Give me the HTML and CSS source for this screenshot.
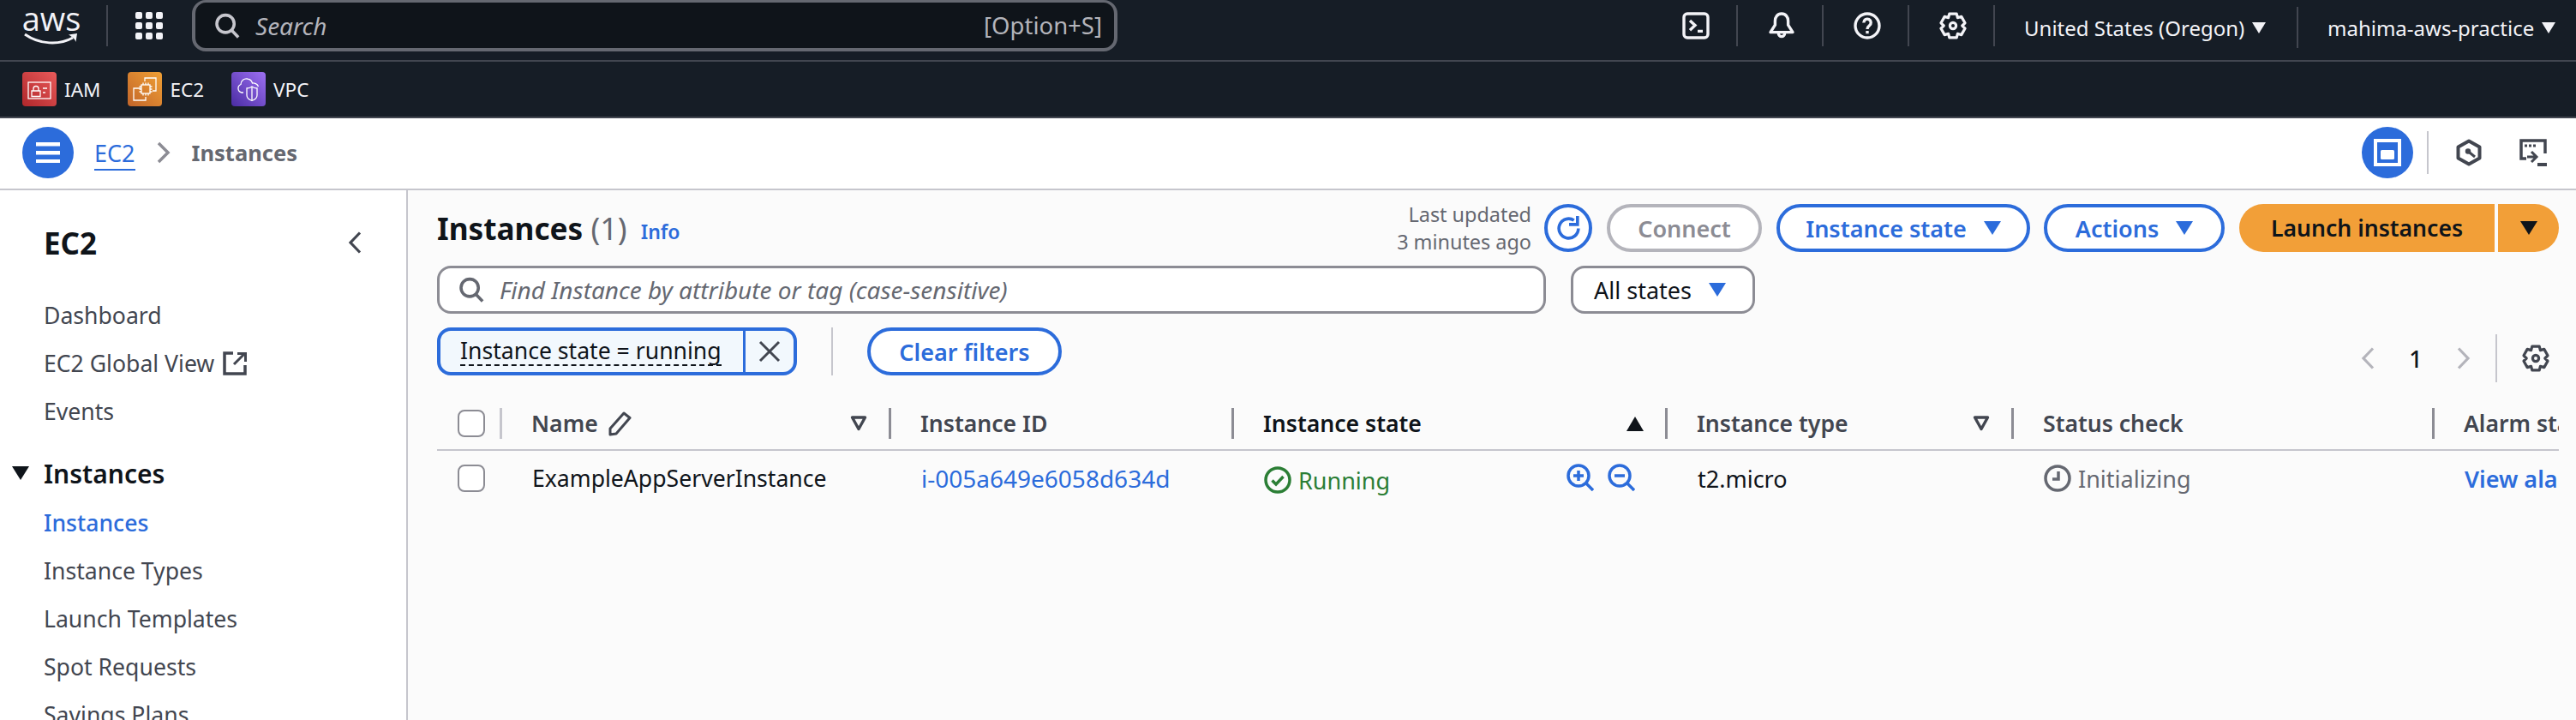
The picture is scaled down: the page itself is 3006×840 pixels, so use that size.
FILE: index.html
```html
<!DOCTYPE html>
<html lang="en">
<head>
    <meta charset="UTF-8">
    <title>Instances | EC2</title>
    <link rel="stylesheet" href="styles.css">
</head>
<body>
    <svg class="sprites" width="0" height="0">
        <symbol id="gear" viewBox="0 0 16 16">
            <path d="M5.900 1.100h4.200l.6 2.200 2.200-.6 2.100 3.700L13.400 8l1.600 1.600-2.100 3.700-2.200-.6-.6 2.200H5.900l-.6-2.200-2.200.6L1 9.600 2.600 8 1 6.400l2.100-3.700 2.200.6z" fill="none" stroke="currentColor" stroke-width="1.600" stroke-linejoin="round"/>
            <circle cx="8" cy="8" r="1.800" fill="none" stroke="currentColor" stroke-width="1.600"/>
        </symbol>
        <symbol id="search" viewBox="0 0 16 16">
            <circle cx="7" cy="6.800" r="5.400" fill="none" stroke="currentColor" stroke-width="1.900"/>
            <path d="M10.800 10.800l4.200 4.400" fill="none" stroke="currentColor" stroke-width="1.900"/>
        </symbol>
        <symbol id="sort-open" viewBox="0 0 20 18">
            <path d="M2.500 2h15L10 15.500z" fill="none" stroke="#424650" stroke-width="3.400" stroke-linejoin="round"/>
        </symbol>
    </svg>

    <header class="top-bar">
        <div class="aws-logo">
            <span class="aws-word">aws</span>
            <svg class="aws-smile" viewBox="0 0 64 14">
                <path d="M1 2c17 12 40 13 56 4" fill="none" stroke="currentColor" stroke-width="3"/>
                <path d="M52 2.500l10-1.500-1.500 10c-1-3-2.500-5-8.500-8.500z" fill="currentColor"/>
            </svg>
        </div>
        <span class="top-divider tall"></span>
        <svg class="grid-icon" viewBox="0 0 32 32">
            <rect x="0" y="0" width="8" height="8" rx="2"/><rect x="12" y="0" width="8" height="8" rx="2"/><rect x="24" y="0" width="8" height="8" rx="2"/>
            <rect x="0" y="12" width="8" height="8" rx="2"/><rect x="12" y="12" width="8" height="8" rx="2"/><rect x="24" y="12" width="8" height="8" rx="2"/>
            <rect x="0" y="24" width="8" height="8" rx="2"/><rect x="12" y="24" width="8" height="8" rx="2"/><rect x="24" y="24" width="8" height="8" rx="2"/>
        </svg>
        <div class="global-search">
            <svg class="global-search-icon"><use href="#search"/></svg>
            <span class="global-search-text">Search</span>
            <span class="global-search-key">[Option+S]</span>
        </div>
        <div class="top-tools">
            <span class="tool-cell">
                <svg class="top-icon" viewBox="0 0 16 16" fill="none" stroke="currentColor" stroke-width="1.700">
                    <rect x="1" y="1" width="14" height="14" rx="2" stroke-linejoin="round"/>
                    <path d="M4.500 5l3 2.800-3 2.800M9 11.200h3"/>
                </svg>
            </span>
            <span class="tool-cell">
                <svg class="top-icon" viewBox="0 0 16 16" fill="none" stroke="currentColor" stroke-width="1.700" stroke-linejoin="round">
                    <path d="M8 1c-2.500 0-3.800 2-3.800 4.200v2.400L1.500 11.800h13l-2.700-4.200V5.200C11.800 3 10.500 1 8 1z"/>
                    <path d="M6.200 12.500a1.800 1.800 0 0 0 3.600 0"/>
                </svg>
            </span>
            <span class="tool-cell">
                <svg class="top-icon" viewBox="0 0 16 16" fill="none" stroke="currentColor" stroke-width="1.700">
                    <circle cx="8" cy="8" r="7"/>
                    <path d="M5.900 6.200a2.100 2.100 0 1 1 3.300 1.700C8.400 8.500 8 9 8 10"/>
                    <path d="M8 11v1.600"/>
                </svg>
            </span>
            <span class="tool-cell">
                <svg class="top-icon"><use href="#gear"/></svg>
            </span>
            <span class="menu-cell region-cell">United States (Oregon)<i class="caret-white"></i></span>
            <span class="menu-cell account-cell">mahima-aws-practice<i class="caret-white"></i></span>
        </div>
    </header>

    <nav class="fav-bar">
        <span class="fav-item">
            <svg class="fav-icon iam" viewBox="0 0 40 40" fill="none" stroke="#fff" stroke-width="1.300">
                <rect x="7" y="12" width="26" height="19"/>
                <path d="M11 22h10v6.500H11zM13 22v-2.500a3 3 0 0 1 6 0V22"/>
                <path d="M24 19h5M24 24h3"/>
            </svg>
            IAM
        </span>
        <span class="fav-item">
            <svg class="fav-icon ec2" viewBox="0 0 40 40" fill="none" stroke="#fff" stroke-width="1.300">
                <path d="M20 11V7h13v15h-4"/>
                <path d="M15 19H7v14h14v-4"/>
                <rect x="16" y="15" width="10" height="10"/>
                <path d="M13.500 17H16M13.500 20H16M13.500 23H16M26 17h2.500M26 20h2.500M26 23h2.500M18 12.500V15M21 12.500V15M24 12.500V15M18 25v2.500M21 25v2.500M24 25v2.500"/>
            </svg>
            EC2
        </span>
        <span class="fav-item">
            <svg class="fav-icon vpc" viewBox="0 0 40 40" fill="none" stroke="#fff" stroke-width="1.300">
                <path d="M14 24h-2a5 5 0 0 1-1-9.500C11 10 15 7 19 8c3 .5 5 3 5.500 5 2-.5 6 1 7 4"/>
                <path d="M24 17c2 1.500 4 2 6 2v8c0 3-3 5.500-6 6.500-3-1-6-3.500-6-6.500v-8c2 0 4-.5 6-2z"/>
                <path d="M24 17v16.500"/>
            </svg>
            VPC
        </span>
    </nav>

    <div class="crumb-bar">
        <span class="round-btn menu-btn">
            <svg viewBox="0 0 28 24" width="28" height="24" fill="#fff">
                <rect y="0" width="28" height="4.500"/><rect y="10" width="28" height="4.500"/><rect y="20" width="28" height="4.500"/>
            </svg>
        </span>
        <a class="crumb-link">EC2</a>
        <svg class="crumb-chevron" viewBox="0 0 16 26" fill="none" stroke="#8c8c94" stroke-width="3.500">
            <path d="M2 2l11 11L2 24"/>
        </svg>
        <span class="crumb-current">Instances</span>
        <div class="crumb-tools">
            <span class="round-btn">
                <svg viewBox="0 0 32 32" width="32" height="32" fill="none">
                    <rect x="2" y="2" width="28" height="28" stroke="#fff" stroke-width="4"/>
                    <rect x="8" y="13" width="16" height="11" rx="1.500" fill="#fff"/>
                </svg>
            </span>
            <span class="crumb-divider"></span>
            <svg class="crumb-tool hexagon" viewBox="0 0 30 32" fill="none" stroke="#424650" stroke-width="4" stroke-linejoin="round">
                <path d="M15 2.500l12.500 7v13l-12.500 7-12.500-7v-13z"/>
                <circle cx="14" cy="14.500" r="2.500" fill="#424650" stroke-width="1.500"/>
                <path d="M14 14.500l8 6.500" stroke-width="3"/>
            </svg>
            <svg class="crumb-tool console" viewBox="0 0 32 32" fill="none" stroke="#424650" stroke-width="3.500">
                <path d="M8 23H2V2h28v15"/>
                <path d="M6 8h3M11 8h3M16 8h3" stroke-width="3"/>
                <path d="M9 21h10M14 15l6 6-6 6" stroke-width="3"/>
                <path d="M21 30h11" stroke-width="4"/>
            </svg>
        </div>
    </div>

    <div class="main-layout">
        <aside class="side-nav">
            <div class="side-head">
                <span class="side-title">EC2</span>
                <svg class="side-collapse" viewBox="0 0 16 26" fill="none" stroke="#424650" stroke-width="3.200">
                    <path d="M14 1.500L3 13l11 11.500"/>
                </svg>
            </div>
            <a class="side-link">Dashboard</a>
            <a class="side-link">EC2 Global View
                <svg class="ext-icon" viewBox="0 0 28 28" fill="none" stroke="#424650" stroke-width="3.500">
                    <path d="M12 2H2v24h24V16"/>
                    <path d="M13 15L25 3M17 2.500h9.500V12" stroke-width="3"/>
                </svg>
            </a>
            <a class="side-link">Events</a>
            <div class="side-section"><i class="caret-dark"></i>Instances</div>
            <a class="side-link active">Instances</a>
            <a class="side-link">Instance Types</a>
            <a class="side-link">Launch Templates</a>
            <a class="side-link">Spot Requests</a>
            <a class="side-link">Savings Plans</a>
        </aside>

        <main class="content">
            <div class="title-row">
                <h1 class="page-title">Instances <span class="title-count">(1)</span></h1>
                <a class="info-link">Info</a>
                <div class="title-actions">
                    <div class="last-updated">Last updated<br>3 minutes ago</div>
                    <span class="btn refresh-btn">
                        <svg viewBox="0 0 32 32" width="33" height="33" fill="none" stroke="currentColor" stroke-width="3.500">
                            <path d="M27 16a11 11 0 1 1-5-9.200"/>
                            <path d="M26 2v9.500H16.500" stroke-width="3.500"/>
                        </svg>
                    </span>
                    <span class="btn btn-disabled">Connect</span>
                    <span class="btn instance-state-btn">Instance state<i class="caret-blue"></i></span>
                    <span class="btn actions-btn">Actions<i class="caret-blue"></i></span>
                    <div class="launch-group">
                        <span class="launch-main">Launch instances</span>
                        <span class="launch-caret"><i class="caret-dark"></i></span>
                    </div>
                </div>
            </div>

            <div class="search-row">
                <div class="find-box">
                    <svg class="find-icon"><use href="#search"/></svg>
                    <span class="find-text">Find Instance by attribute or tag (case-sensitive)</span>
                </div>
                <div class="state-select">All states<i class="caret-blue"></i></div>
            </div>

            <div class="filter-row">
                <div class="filter-chip">
                    <span class="chip-label"><span class="chip-text">Instance state = running</span></span>
                    <span class="chip-close">
                        <svg viewBox="0 0 26 26" width="26" height="26" fill="none" stroke="#424650" stroke-width="3"><path d="M2 2l22 22M24 2L2 24"/></svg>
                    </span>
                </div>
                <span class="filter-divider"></span>
                <span class="btn clear-btn">Clear filters</span>
                <div class="pager">
                    <svg class="pager-arrow" viewBox="0 0 16 26" fill="none" stroke="#b4b4bb" stroke-width="3.200"><path d="M14 1.500L3 13l11 11.500"/></svg>
                    <span class="pager-num">1</span>
                    <svg class="pager-arrow" viewBox="0 0 16 26" fill="none" stroke="#b4b4bb" stroke-width="3.200"><path d="M2 1.500L13 13 2 24.500"/></svg>
                    <span class="pager-divider"></span>
                    <svg class="pager-gear"><use href="#gear"/></svg>
                </div>
            </div>

            <div class="table-head">
                <div class="th th-check"><span class="checkbox"></span></div>
                <div class="th"><span class="th-label">Name</span>
                    <svg class="pencil" viewBox="0 0 28 30" fill="none" stroke="#424650" stroke-width="3" stroke-linejoin="round">
                        <path d="M19 3l7 5.500L10 27l-7 1 0-7z"/>
                    </svg>
                    <svg class="sort-open"><use href="#sort-open"/></svg>
                </div>
                <div class="th"><span class="th-label">Instance ID</span></div>
                <div class="th"><span class="th-label th-sorted">Instance state</span><i class="sort-up"></i></div>
                <div class="th"><span class="th-label">Instance type</span><svg class="sort-open"><use href="#sort-open"/></svg></div>
                <div class="th"><span class="th-label">Status check</span></div>
                <div class="th th-last"><span class="th-label">Alarm status</span></div>
            </div>

            <div class="table-row">
                <div class="td td-check"><span class="checkbox"></span></div>
                <div class="td td-name">ExampleAppServerInstance</div>
                <div class="td"><a class="link">i-005a649e6058d634d</a></div>
                <div class="td state-cell">
                    <span class="running">
                        <svg viewBox="0 0 32 32" width="32" height="32" fill="none" stroke="currentColor" stroke-width="3.500">
                            <circle cx="16" cy="16" r="14"/>
                            <path d="M9.500 16.500l4.500 4.500 8.500-9" stroke-width="3.500"/>
                        </svg>
                        Running
                    </span>
                    <span class="zoom-icons">
                        <svg class="zoom-icon" viewBox="0 0 32 32" fill="none" stroke="currentColor" stroke-width="3.500">
                            <circle cx="14" cy="14" r="12"/><path d="M23 23l8 8M8 14h12M14 8v12"/>
                        </svg>
                        <svg class="zoom-icon" viewBox="0 0 32 32" fill="none" stroke="currentColor" stroke-width="3.500">
                            <circle cx="14" cy="14" r="12"/><path d="M23 23l8 8M8 14h12"/>
                        </svg>
                    </span>
                </div>
                <div class="td td-type">t2.micro</div>
                <div class="td status-cell">
                    <svg viewBox="0 0 32 32" width="32" height="32" fill="none" stroke="currentColor" stroke-width="3.500">
                        <circle cx="16" cy="16" r="14"/>
                        <path d="M17 8v9h-7"/>
                    </svg>
                    Initializing
                </div>
                <div class="td td-last"><a class="link strong">View alarms</a></div>
            </div>
        </main>
    </div>
</body>
</html>
```

FILE: styles.css
```css
* {
    box-sizing: border-box;
}
body {
    margin: 0;
    width: 3006px;
    height: 840px;
    overflow: hidden;
    font-family: "Noto Sans", sans-serif;
    font-size: 27px;
    color: #0f141a;
    background-color: #fbfbfb;
}
.sprites {
    position: absolute;
}
i {
    display: inline-block;
}

/* top bar */
.top-bar {
    height: 72px;
    background-color: #161d26;
    border-bottom: 2px solid #424650;
    color: #f3f3f7;
    display: flex;
    align-items: flex-start;
    padding-left: 28px;
}
.aws-logo {
    width: 64px;
    height: 48px;
    margin-top: 5px;
    display: flex;
    flex-direction: column;
    align-items: center;
}
.aws-word {
    font-family: "Open Sans", sans-serif;
    font-size: 38px;
    line-height: 32px;
    height: 32px;
}
.aws-smile {
    width: 64px;
    height: 14px;
    margin-top: 1px;
}
.top-divider.tall {
    width: 2px;
    height: 48px;
    margin: 6px 32px 0 32px;
    background-color: #424650;
}
.grid-icon {
    width: 32px;
    height: 32px;
    margin-top: 14px;
    fill: #f3f3f7;
}
.global-search {
    width: 1080px;
    height: 60px;
    margin-left: 34px;
    border: 4px solid #656871;
    border-top-width: 3px;
    border-radius: 16px;
    background-color: #0f141a;
    display: flex;
    align-items: center;
    padding: 0 14px 0 22px;
    color: #b4b4bb;
    font-size: 28px;
}
.global-search-icon {
    width: 30px;
    height: 30px;
    color: #c6c6cd;
}
.global-search-text {
    font-style: italic;
    margin-left: 18px;
}
.global-search-key {
    margin-left: auto;
    font-size: 27.5px;
}
.top-tools {
    margin-left: auto;
    display: flex;
    align-items: flex-start;
}
.tool-cell {
    width: 100px;
    height: 48px;
    margin-top: 6px;
    border-right: 2px solid #424650;
    padding-left: 3px;
    display: flex;
    align-items: center;
    justify-content: center;
}
.top-icon {
    width: 32px;
    height: 32px;
    color: #f3f3f7;
}
.menu-cell {
    height: 48px;
    margin-top: 8px;
    display: flex;
    align-items: center;
    font-size: 24px;
    white-space: nowrap;
}
.region-cell {
    width: 354px;
    padding-left: 34px;
    border-right: 2px solid #424650;
}
.account-cell {
    width: 324px;
    padding-left: 34px;
}
.caret-white {
    width: 0;
    height: 0;
    margin-left: 9px;
    border-left: 8px solid transparent;
    border-right: 8px solid transparent;
    border-top: 13px solid #f3f3f7;
}

/* favorites */
.fav-bar {
    height: 66px;
    background-color: #161d26;
    border-bottom: 2px solid #424650;
    display: flex;
    align-items: flex-start;
    padding: 12px 0 0 26px;
    gap: 32px;
}
.fav-item {
    height: 40px;
    display: flex;
    align-items: center;
    gap: 9px;
    font-size: 22.5px;
    color: #f3f3f7;
}
.fav-icon {
    width: 40px;
    height: 40px;
    border-radius: 4px;
}
.fav-icon.iam {
    background: linear-gradient(45deg, #b0272b, #ea5a5a);
}
.fav-icon.ec2 {
    background: linear-gradient(45deg, #c2652a, #f0a035);
}
.fav-icon.vpc {
    background: linear-gradient(45deg, #4a2ca3, #9d70f2);
}

/* breadcrumbs */
.crumb-bar {
    height: 84px;
    background-color: #fff;
    border-bottom: 2px solid #c6c6cd;
    display: flex;
    align-items: center;
    padding: 0 34px 2px 26px;
}
.round-btn {
    width: 60px;
    height: 60px;
    border-radius: 50%;
    background-color: #2c6cdb;
    display: flex;
    align-items: center;
    justify-content: center;
}
.crumb-link {
    margin-left: 24px;
    color: #2c6cdb;
    border-bottom: 2px solid #2c6cdb;
    line-height: 36px;
    height: 38px;
    margin-top: 4px;
}
.crumb-chevron {
    width: 16px;
    height: 26px;
    margin: 0 25px;
}
.crumb-current {
    font-size: 25.5px;
    font-weight: 700;
    color: #656871;
}
.crumb-tools {
    margin-left: auto;
    display: flex;
    align-items: center;
}
.crumb-divider {
    width: 2px;
    height: 50px;
    margin: 0 32px 0 16px;
    background-color: #c6c6cd;
}
.crumb-tool {
    height: 32px;
}
.crumb-tool.hexagon {
    width: 30px;
    margin-right: 44px;
}
.crumb-tool.console {
    width: 32px;
}

/* layout */
.main-layout {
    display: flex;
    height: 618px;
}
.side-nav {
    width: 476px;
    flex-shrink: 0;
    background-color: #fff;
    border-right: 2px solid #c6c6cd;
    padding-left: 51px;
    overflow: hidden;
}
.side-head {
    height: 118px;
    padding: 38px 52px 0 0;
    display: flex;
    justify-content: space-between;
    align-items: flex-start;
}
.side-title {
    font-size: 35px;
    font-weight: 700;
    line-height: 48px;
}
.side-collapse {
    width: 16px;
    height: 26px;
    margin-top: 10px;
}
.side-link {
    height: 56px;
    display: flex;
    align-items: center;
    color: #424650;
    white-space: nowrap;
    font-size: 26.6px;
}
.side-link.active {
    color: #2c6cdb;
    font-weight: 500;
}
.ext-icon {
    width: 28px;
    height: 28px;
    margin-left: 10px;
}
.side-section {
    height: 56px;
    display: flex;
    align-items: center;
    position: relative;
    font-size: 30px;
    font-weight: 600;
    margin-top: 16px;
    margin-bottom: 2px;
}
.side-section .caret-dark {
    position: absolute;
    left: -37px;
}
.caret-dark {
    width: 0;
    height: 0;
    border-left: 10px solid transparent;
    border-right: 10px solid transparent;
    border-top: 16px solid #0f141a;
}

/* content */
.content {
    flex: 1;
    min-width: 0;
    padding: 16px 20px 0 34px;
    overflow: hidden;
}
.title-row {
    height: 56px;
    display: flex;
    align-items: center;
}
.page-title {
    margin: 0;
    font-size: 35.2px;
    font-weight: 700;
    line-height: 56px;
    white-space: nowrap;
}
.title-count {
    font-size: 36px;
    font-weight: 400;
    color: #656871;
}
.info-link {
    margin: 8px 0 0 16px;
    font-size: 23px;
    font-weight: 600;
    color: #2c6cdb;
}
.title-actions {
    margin-left: auto;
    display: flex;
    align-items: center;
}
.last-updated {
    text-align: right;
    font-size: 23.4px;
    line-height: 32px;
    color: #656871;
    margin-right: 15px;
}
.btn {
    height: 56px;
    border: 4px solid #2c6cdb;
    border-radius: 28px;
    background-color: #fff;
    color: #2c6cdb;
    font-weight: 600;
    display: flex;
    align-items: center;
    justify-content: center;
    white-space: nowrap;
}
.refresh-btn {
    width: 56px;
    margin-right: 17px;
}
.btn-disabled {
    width: 181px;
    border-color: #b4b4bb;
    color: #8c8c94;
    margin-right: 17px;
}
.instance-state-btn {
    width: 296px;
    margin-right: 16px;
}
.actions-btn {
    width: 211px;
    margin-right: 17px;
}
.caret-blue {
    width: 0;
    height: 0;
    margin-left: 20px;
    border-left: 10px solid transparent;
    border-right: 10px solid transparent;
    border-top: 16px solid #2c6cdb;
}
.launch-group {
    display: flex;
    gap: 4px;
    height: 56px;
}
.launch-main, .launch-caret {
    background-color: #f29f38;
    display: flex;
    align-items: center;
    justify-content: center;
    font-weight: 600;
    font-size: 26.6px;
}
.launch-main {
    width: 298px;
    border-radius: 28px 0 0 28px;
}
.launch-caret {
    width: 71px;
    border-radius: 0 28px 28px 0;
}

.search-row {
    margin-top: 16px;
    height: 56px;
    display: flex;
    gap: 29px;
}
.find-box {
    width: 1294px;
    border: 3px solid #8c8c94;
    border-radius: 16px;
    background-color: #fff;
    display: flex;
    align-items: center;
    padding-left: 22px;
}
.find-icon {
    width: 30px;
    height: 30px;
    color: #656871;
}
.find-text {
    margin-left: 18px;
    font-style: italic;
    font-size: 28px;
    color: #656871;
}
.state-select {
    width: 215px;
    border: 3px solid #8c8c94;
    border-radius: 16px;
    background-color: #fff;
    display: flex;
    align-items: center;
    padding-left: 24px;
}
.state-select .caret-blue {
    margin-left: 20px;
}

.filter-row {
    margin-top: 16px;
    height: 56px;
    display: flex;
    align-items: center;
}
.filter-chip {
    width: 420px;
    height: 56px;
    border: 4px solid #2c6cdb;
    border-radius: 16px;
    background-color: #f2f8fd;
    display: flex;
}
.chip-label {
    width: 356px;
    border-right: 3px solid #2c6cdb;
    padding-left: 23px;
    display: flex;
    align-items: center;
}
.chip-text {
    font-size: 26.6px;
    line-height: 32px;
    border-bottom: 2px dashed #0f141a;
    white-space: nowrap;
}
.chip-close {
    flex: 1;
    display: flex;
    align-items: center;
    justify-content: center;
}
.filter-divider {
    width: 2px;
    height: 56px;
    margin: 0 40px;
    background-color: #c6c6cd;
}
.clear-btn {
    width: 227px;
}
.pager {
    margin-left: auto;
    display: flex;
    align-items: center;
    margin-top: 16px;
}
.pager-arrow {
    width: 16px;
    height: 26px;
}
.pager-num {
    width: 96px;
    text-align: center;
    font-weight: 500;
}
.pager-divider {
    width: 2px;
    height: 56px;
    margin: 0 29px;
    background-color: #c6c6cd;
}
.pager-gear {
    width: 32px;
    height: 32px;
    color: #424650;
    margin-right: 11px;
}

/* table */
.table-head, .table-row {
    display: grid;
    grid-template-columns: 76px 454px 400px 506px 404px 491px 145px;
}
.table-head {
    margin-top: 38px;
    height: 50px;
    border-bottom: 2px solid #c6c6cd;
}
.th {
    height: 36px;
    border-right: 3px solid #8c8c94;
    padding: 0 25px 0 34px;
    display: flex;
    align-items: center;
    font-weight: 600;
    font-size: 26.6px;
    color: #424650;
    white-space: nowrap;
    overflow: hidden;
}
.th-check {
    padding: 0 0 0 24px;
    border-right-color: #c6c6cd;
}
.th-last {
    border-right: none;
    padding-right: 0;
}
.th-sorted {
    color: #0f141a;
}
.checkbox {
    display: block;
    flex-shrink: 0;
    width: 32px;
    height: 32px;
    border: 2px solid #8c8c94;
    border-radius: 8px;
    background-color: #fff;
}
.pencil {
    width: 28px;
    height: 30px;
    margin-left: 11px;
}
.sort-open {
    margin-left: auto;
    width: 20px;
    height: 18px;
    flex-shrink: 0;
}
.sort-up {
    margin-left: auto;
    width: 0;
    height: 0;
    border-left: 10px solid transparent;
    border-right: 10px solid transparent;
    border-bottom: 17px solid #0f141a;
}
.table-row {
    height: 64px;
}
.td {
    padding-left: 35px;
    display: flex;
    align-items: center;
    white-space: nowrap;
    overflow: hidden;
}
.td-check {
    padding-left: 24px;
}
.td-name {
    font-size: 26.6px;
}
.link {
    font-size: 28px;
    color: #2c6cdb;
}
.link.strong {
    font-size: 27px;
    font-weight: 600;
}
.state-cell {
    padding-right: 38px;
    justify-content: space-between;
}
.running {
    display: flex;
    align-items: center;
    gap: 8px;
    color: #2b7e35;
    margin-top: 4px;
}
.zoom-icons {
    display: flex;
    gap: 16px;
    color: #2c6cdb;
    margin-top: -2px;
}
.zoom-icon {
    width: 32px;
    height: 32px;
}
.status-cell {
    gap: 8px;
    color: #656871;
}
```
